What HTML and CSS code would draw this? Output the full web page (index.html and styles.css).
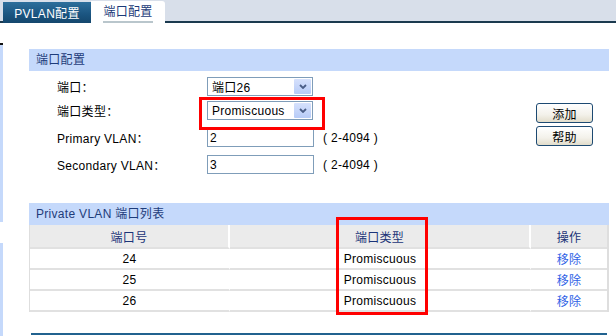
FILE: index.html
```html
<!DOCTYPE html>
<html lang="zh-CN">
<head>
    <meta charset="UTF-8">
    <title>端口配置</title>
<link rel="stylesheet" href="styles.css">
</head>
<body>
    <div class="topbar">
        <div class="tab">PVLAN配置</div>
        <div class="tab tab-on"><span class="tab-text">端口配置</span></div>
    </div>
    <div class="main">
        <div class="rail">
            <div class="rail-gap"></div>
            <div class="rail-mark"></div>
            <div class="rail-blue rail-top"></div>
            <div class="rail-gap2"></div>
            <div class="rail-blue rail-bottom"></div>
        </div>
        <div class="content">
            <div class="sec-head">端口配置</div>
            <div class="form">
                <div class="fields">
                    <div class="row row-first">
                        <div class="label">端口：</div>
                        <div class="select">
                            <span class="select-text">端口26</span>
                            <span class="select-btn"><svg width="8" height="5" viewBox="0 0 8 5"><path d="M1 1 L4 4 L7 1" fill="none" stroke="#4a5d86" stroke-width="1.8"/></svg></span>
                        </div>
                    </div>
                    <div class="row">
                        <div class="label">端口类型：</div>
                        <div class="select marked">
                            <span class="select-text">Promiscuous</span>
                            <span class="select-btn"><svg width="8" height="5" viewBox="0 0 8 5"><path d="M1 1 L4 4 L7 1" fill="none" stroke="#4a5d86" stroke-width="1.8"/></svg></span>
                        </div>
                    </div>
                    <div class="row">
                        <div class="label">Primary VLAN：</div>
                        <input class="field" type="text" value="2">
                        <span class="range">(&nbsp;2-4094&nbsp;)</span>
                    </div>
                    <div class="row">
                        <div class="label">Secondary VLAN：</div>
                        <input class="field" type="text" value="3">
                        <span class="range">(&nbsp;2-4094&nbsp;)</span>
                    </div>
                </div>
                <div class="actions">
                    <button class="btn">添加</button>
                    <button class="btn">帮助</button>
                </div>
            </div>
            <div class="list">
                <div class="sec-head">Private VLAN 端口列表</div>
                <table class="grid">
                    <tr>
                        <th class="c1">端口号</th>
                        <th class="c2">端口类型</th>
                        <th class="c3">操作</th>
                    </tr>
                    <tr>
                        <td>24</td>
                        <td>Promiscuous</td>
                        <td><a href="#" class="del">移除</a></td>
                    </tr>
                    <tr>
                        <td>25</td>
                        <td>Promiscuous</td>
                        <td><a href="#" class="del">移除</a></td>
                    </tr>
                    <tr>
                        <td>26</td>
                        <td>Promiscuous</td>
                        <td><a href="#" class="del">移除</a></td>
                    </tr>
                </table>
                <div class="mark-box"></div>
            </div>
            <div class="foot-line"></div>
        </div>
    </div>
</body>
</html>
```

FILE: styles.css
```css
* {
    margin: 0;
    padding: 0;
    box-sizing: border-box;
}
body {
    width: 616px;
    height: 336px;
    overflow: hidden;
    background: white;
    font-family: "Liberation Sans", "Noto Sans CJK SC", sans-serif;
    font-size: 12px;
    letter-spacing: 0.3px;
    color: black;
}
.topbar {
    display: flex;
    align-items: flex-end;
    height: 23px;
    padding-left: 3px;
    background: #d8dfea;
    border-bottom: 2px solid #1b3a4f;
}
.tab {
    height: 21px;
    width: 88px;
    margin-bottom: -2px;
    display: flex;
    justify-content: center;
    align-items: center;
    color: white;
    font-size: 12px;
    background: linear-gradient(#2d6f9c, #1a5480 60%, #14476d);
}
.tab-on {
    height: 22px;
    width: 74px;
    background: white;
    color: #1b3a78;
    border-radius: 0 3px 0 0;
}
.tab-text {
    display: block;
    padding-top: 1px;
    line-height: 18px;
    border-bottom: 2px solid #b9c6cc;
}
.main {
    display: flex;
}
.rail {
    width: 3px;
    display: flex;
    flex-direction: column;
}
.rail-gap {
    height: 20px;
}
.rail-mark {
    height: 2px;
    background: #111;
}
.rail-blue {
    background: #c5d9fb;
}
.rail-top {
    height: 177px;
}
.rail-gap2 {
    height: 21px;
}
.rail-bottom {
    height: 100px;
}
.content {
    width: 580px;
    margin-left: 26px;
    padding-top: 26px;
}
.sec-head {
    height: 22px;
    line-height: 22px;
    padding-left: 7px;
    background: #c5d9fb;
    color: #1e3c7a;
}
.form {
    display: flex;
    justify-content: space-between;
}
.fields {
    padding-left: 28px;
    padding-top: 6px;
}
.row {
    display: flex;
    align-items: center;
    height: 19px;
    margin-top: 8px;
}
.row-first {
    margin-top: 0;
    margin-bottom: -3px;
}
.label {
    width: 150px;
}
.select {
    position: relative;
    width: 106px;
    height: 19px;
    border: 1px solid #7f9db9;
    display: flex;
    align-items: center;
}
.select-text {
    padding-left: 4px;
}
.select-btn {
    margin-left: auto;
    margin-right: 1px;
    width: 17px;
    height: 15px;
    border-radius: 1px;
    background: linear-gradient(#d6e1fc, #b7cbf7);
    display: flex;
    justify-content: center;
    align-items: center;
}
.marked::after {
    content: "";
    position: absolute;
    left: -9px;
    top: -5px;
    width: 120px;
    height: 27px;
    border: 3px solid #ff0000;
}
.field {
    width: 107px;
    height: 19px;
    border: 1px solid #7f9db9;
    padding-left: 2px;
    font-family: inherit;
    font-size: 12px;
    color: black;
}
.range {
    margin-left: 9px;
}
.actions {
    display: flex;
    flex-direction: column;
    gap: 3px;
    padding-top: 32px;
    padding-right: 16px;
}
.btn {
    width: 57px;
    height: 20px;
    border: 1px solid #1d4a72;
    border-radius: 3px;
    background: linear-gradient(#ffffff, #f3f1ea 60%, #e2ddcb);
    font-family: inherit;
    font-size: 12px;
    letter-spacing: 0.3px;
    color: black;
}
.list {
    position: relative;
    margin-top: 29px;
}
.grid {
    width: 580px;
    border-collapse: separate;
    border-spacing: 0;
    border-left: 1px solid #dedede;
    border-right: 2px solid #dedede;
}
.grid th {
    height: 24px;
    background: #ebebeb;
    color: #1b3478;
    font-weight: normal;
    border-bottom: 2px solid #e1e1e1;
}
.grid th.c1 {
    width: 200px;
    border-right: 2px solid white;
}
.grid th.c2 {
    width: 301px;
    border-right: 2px solid white;
}
.grid td {
    height: 21px;
    text-align: center;
    border-bottom: 2px solid #e1e1e1;
}
.grid td:not(:last-child) {
    border-right: 1px solid white;
}
.del {
    color: #2f62e6;
    text-decoration: none;
}
.mark-box {
    position: absolute;
    left: 307px;
    top: 14px;
    width: 92px;
    height: 98px;
    border: 3px solid #ff0000;
}
.foot-line {
    height: 2px;
    margin: 21px 2px 0;
    background: #21628f;
}
```
